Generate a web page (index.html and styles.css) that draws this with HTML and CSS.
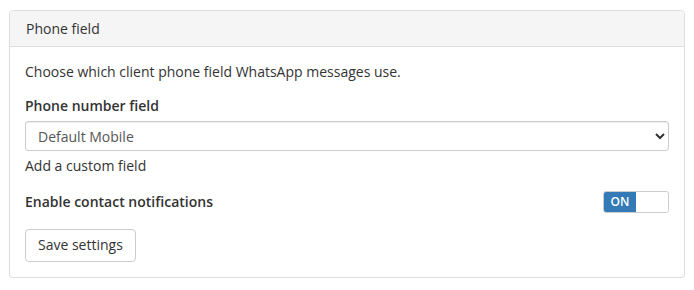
FILE: index.html
```html
<!DOCTYPE html>
<html lang="en">
<head>
<meta charset="utf-8">
<title>Phone field</title>
<link rel="stylesheet" href="styles.css">
</head>
<body>
<div class="panel">
  <div class="panel-heading">Phone field</div>
  <div class="panel-body">
    <p class="intro">Choose which client phone field WhatsApp messages use.</p>
    <div class="form-group">
      <label class="label" for="phone">Phone number field</label>
      <div class="select-wrap">
        <select id="phone" class="select">
          <option>Default Mobile</option>
        </select>
        <svg class="chevron" width="10" height="8" viewBox="0 0 10 8"><path d="M1 2 L5 6 L9 2" fill="none" stroke="#333" stroke-width="2"/></svg>
      </div>
      <div class="help">Add a custom field</div>
    </div>
    <div class="toggle-row">
      <span class="label">Enable contact notifications</span>
      <span class="toggle"><span class="toggle-on">ON</span><span class="toggle-off"></span></span>
    </div>
    <button class="btn" type="button">Save settings</button>
  </div>
</div>
</body>
</html>
```

FILE: styles.css
```css
* { box-sizing: border-box; }
body {
  margin: 10px 9px;
  font-family: "Open Sans", "Liberation Sans", sans-serif;
  font-size: 14px;
  line-height: 20px;
  color: #333;
  background: #fff;
}
.panel {
  border: 1px solid #ddd;
  border-radius: 4px;
  box-shadow: 0 1px 1px rgba(0,0,0,0.05);
}
.panel-heading {
  background: #f5f5f5;
  border-bottom: 1px solid #ddd;
  border-radius: 3px 3px 0 0;
  padding: 8px 16px 6px;
  height: 36px;
  line-height: 20px;
}
.panel-body {
  padding: 15px;
}
.intro {
  margin: 0 0 14px;
}
.form-group {
  margin-bottom: 15px;
}
.label {
  display: block;
  font-weight: 600;
  margin-bottom: 5px;
}
.select-wrap {
  position: relative;
}
.select {
  appearance: none;
  -webkit-appearance: none;
  display: block;
  width: 100%;
  height: 30px;
  padding: 5px 12px 3px;
  font: inherit;
  color: #555;
  background: #fff;
  border: 1px solid #ccc;
  border-radius: 3px;
  box-shadow: inset 0 1px 1px rgba(0,0,0,0.075);
}
.chevron {
  position: absolute;
  right: 4px;
  top: 11px;
  pointer-events: none;
}
.help {
  margin-top: 5px;
}
.toggle-row {
  display: flex;
  justify-content: space-between;
  align-items: center;
  margin-bottom: 16px;
}
.toggle-row .label {
  margin: 0;
}
.toggle {
  display: flex;
  width: 66px;
  height: 22px;
  border: 1px solid #ccc;
  border-radius: 3px;
  overflow: hidden;
}
.toggle-on {
  width: 32px;
  background: #337ab7;
  color: #fff;
  font-size: 12px;
  font-weight: 600;
  line-height: 20px;
  text-align: center;
}
.toggle-off {
  flex: 1;
  background: #fff;
}
.btn {
  display: inline-block;
  font: inherit;
  color: #333;
  background: #fff;
  border: 1px solid #ccc;
  border-radius: 4px;
  height: 33px;
  padding: 5px 12px 6px;
  line-height: 20px;
}
```
